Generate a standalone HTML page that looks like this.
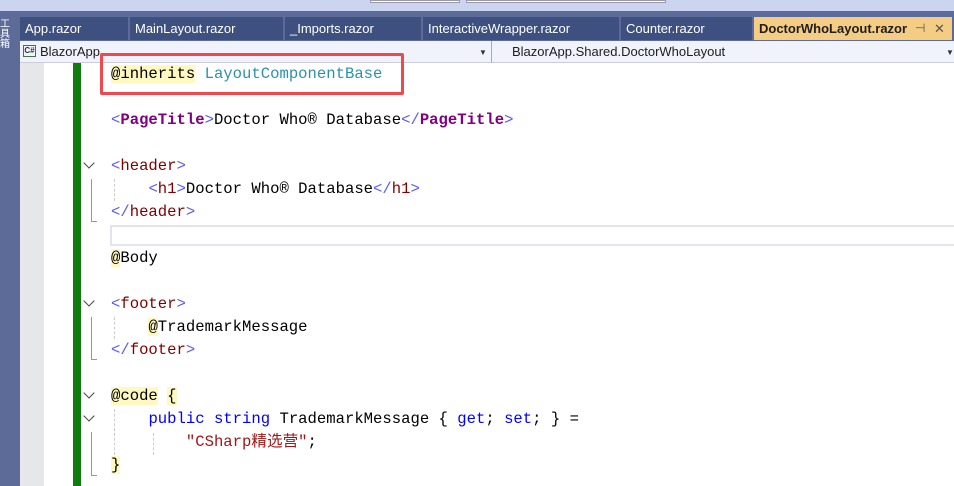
<!DOCTYPE html>
<html><head><meta charset="utf-8"><style>
*{margin:0;padding:0;box-sizing:border-box}
body{width:954px;height:486px;overflow:hidden;background:#fff;position:relative;font-family:"Liberation Sans","Noto Sans CJK SC",sans-serif}
.abs{position:absolute}
.tab{position:absolute;top:17px;height:23px;background:#3d5080;color:#fff;font-size:13px;line-height:23px;padding-left:5px;white-space:nowrap;overflow:hidden}
.code{position:absolute;left:111px;top:63px;font-family:"Liberation Mono","Noto Sans CJK SC",monospace;font-size:15.6px;line-height:23px;white-space:pre;color:#000}
.t{color:#800000}.b{color:#5a5aff}.p{color:#800080;font-weight:bold}.k{color:#0000ff}.s{color:#a31515}.hl{background:#fff8c0}.c{color:#2b91af}
.chev{position:absolute;left:85px;width:8px;height:8px;border-right:1.5px solid #444;border-bottom:1.5px solid #444;transform:rotate(45deg)}
.vl{position:absolute;left:91px;width:6px;border-left:1px solid #999;border-bottom:1px solid #999}
.dl{position:absolute;border-left:1px dashed #ccc}
</style></head><body>
<div class="abs" style="left:0;top:0;width:954px;height:11px;background:#ccd5f0"></div>
<div class="abs" style="left:370px;top:0;width:90px;height:3px;background:#fff;border:1px solid #99a"></div>
<div class="abs" style="left:466px;top:0;width:200px;height:3px;background:#fff;border:1px solid #99a"></div>
<div class="abs" style="left:0;top:11px;width:954px;height:6px;background:#5d6b99"></div>
<div class="abs" style="left:0;top:17px;width:20px;height:469px;background:#5d6b99"></div>
<div class="abs" style="left:0;top:20px;width:12px;color:#fff;font-size:10px;line-height:10px">工<br>具<br>箱</div>
<div class="abs" style="left:20px;top:17px;width:934px;height:24px;background:#5d6b99"></div>
<div class="tab" style="left:20px;width:108px">App.razor</div>
<div class="tab" style="left:130px;width:153px">MainLayout.razor</div>
<div class="tab" style="left:285px;width:136px">_Imports.razor</div>
<div class="tab" style="left:423px;width:196px">InteractiveWrapper.razor</div>
<div class="tab" style="left:621px;width:131px">Counter.razor</div>
<div class="tab" style="left:754px;width:198px;background:#f5cc84;color:#1e1e1e;font-weight:bold">DoctorWhoLayout.razor<span style="position:absolute;left:161px;font-weight:normal;color:#555;font-size:12px">⊣</span><span style="position:absolute;left:180px;font-weight:normal;color:#555">✕</span></div>
<div class="abs" style="left:20px;top:41px;width:934px;height:22px;background:#f0f3fb;border-bottom:1px solid #ccd"></div>
<div class="abs" style="left:23px;top:45px;width:13px;height:12px;border:1px solid #3a7a3a;font-size:8px;line-height:10px;text-align:center;color:#333;font-weight:bold">C#</div>
<div class="abs" style="left:40px;top:42px;font-size:13px;line-height:20px;color:#1e1e1e">BlazorApp</div>
<div class="abs" style="left:479px;top:48px;font-size:8px;color:#333">▼</div>
<div class="abs" style="left:491px;top:41px;width:1px;height:22px;background:#aab"></div>
<div class="abs" style="left:512px;top:42px;font-size:13px;line-height:20px;color:#1e1e1e">BlazorApp.Shared.DoctorWhoLayout</div>
<div class="abs" style="left:946px;top:48px;font-size:8px;color:#333">▼</div>
<div class="abs" style="left:20px;top:63px;width:24px;height:423px;background:#e6e7e8"></div>
<div class="abs" style="left:73px;top:63px;width:8px;height:423px;background:#107c10"></div>
<div class="abs" style="left:110px;top:225px;width:844px;height:21px;border:2px solid #e4e4ee;border-right:none"></div>
<div class="abs" style="left:100px;top:53px;width:304px;height:42px;border:3px solid #f0484c;border-radius:2px"></div>
<div class="chev" style="top:159px"></div><div class="vl" style="top:179px;height:43px"></div><div class="dl" style="left:114px;top:179px;height:22px"></div>
<div class="chev" style="top:297px"></div><div class="vl" style="top:317px;height:43px"></div><div class="dl" style="left:114px;top:317px;height:22px"></div>
<div class="chev" style="top:389px"></div><div class="chev" style="top:412px"></div><div class="vl" style="top:432px;height:44px"></div><div class="dl" style="left:114px;top:409px;height:46px"></div><div class="dl" style="left:153px;top:433px;height:22px"></div>
<div class="code"><span class="hl">@inherits</span> <span class="c">LayoutComponentBase</span>

<span class="b">&lt;</span><span class="p">PageTitle</span><span class="b">&gt;</span>Doctor Who® Database<span class="b">&lt;/</span><span class="p">PageTitle</span><span class="b">&gt;</span>

<span class="b">&lt;</span><span class="t">header</span><span class="b">&gt;</span>
    <span class="b">&lt;</span><span class="t">h1</span><span class="b">&gt;</span>Doctor Who® Database<span class="b">&lt;/</span><span class="t">h1</span><span class="b">&gt;</span>
<span class="b">&lt;/</span><span class="t">header</span><span class="b">&gt;</span>

<span class="hl">@</span>Body

<span class="b">&lt;</span><span class="t">footer</span><span class="b">&gt;</span>
    <span class="hl">@</span>TrademarkMessage
<span class="b">&lt;/</span><span class="t">footer</span><span class="b">&gt;</span>

<span class="hl">@code</span> <span class="hl">{</span>
    <span class="k">public</span> <span class="k">string</span> TrademarkMessage { <span class="k">get</span>; <span class="k">set</span>; } =
        <span class="s">"CSharp精选营"</span>;
<span class="hl">}</span></div>
</body></html>
